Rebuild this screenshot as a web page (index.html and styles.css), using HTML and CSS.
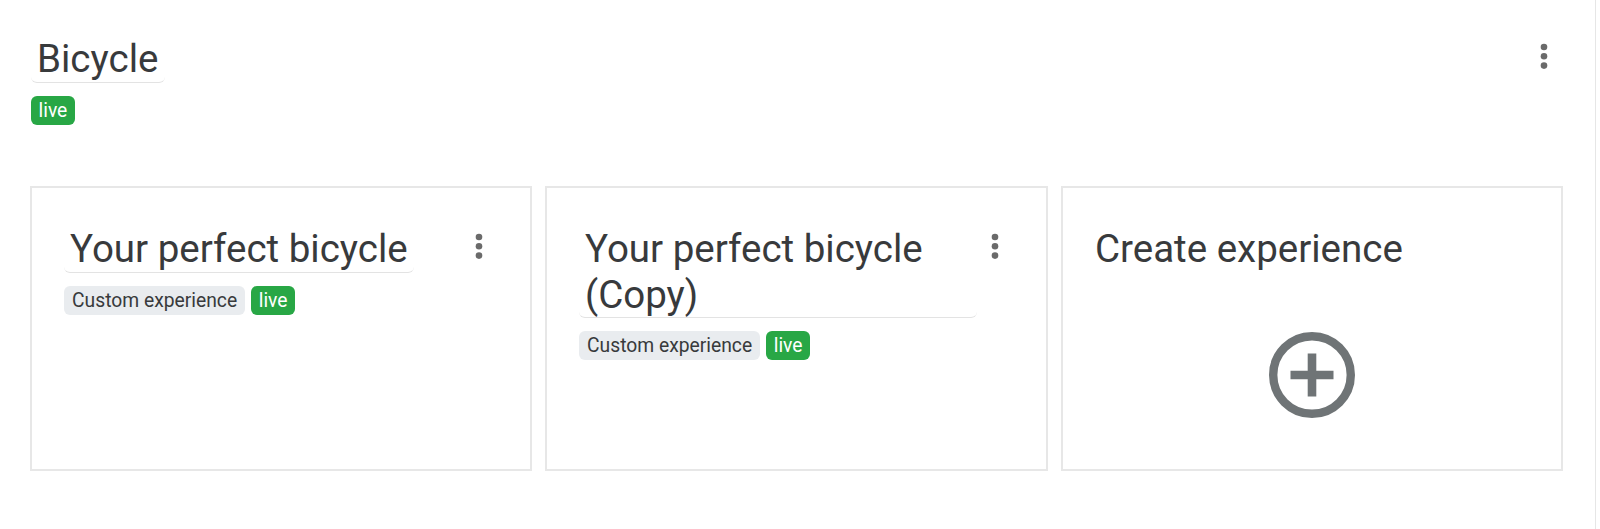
FILE: index.html
```html
<!DOCTYPE html>
<html lang="en">
<head>
<meta charset="utf-8">
<title>Bicycle</title>
<link rel="stylesheet" href="styles.css">
</head>
<body>
<main class="page">
  <header class="head">
    <div class="head-text">
      <h1 class="title title-main">Bicycle</h1>
      <div class="badges"><span class="badge badge-live">live</span></div>
    </div>
    <button class="kebab" aria-label="More"><svg width="10" height="30" viewBox="0 0 10 30"><circle cx="5" cy="5" r="3.300"/><circle cx="5" cy="14.300" r="3.300"/><circle cx="5" cy="23.600" r="3.300"/></svg></button>
  </header>
  <section class="cards">
    <article class="card">
      <div class="card-body">
        <h2 class="title title-card">Your perfect bicycle</h2>
        <div class="badges"><span class="badge badge-type">Custom experience</span><span class="badge badge-live">live</span></div>
      </div>
      <button class="kebab" aria-label="More"><svg width="10" height="30" viewBox="0 0 10 30"><circle cx="5" cy="5" r="3.300"/><circle cx="5" cy="14.300" r="3.300"/><circle cx="5" cy="23.600" r="3.300"/></svg></button>
    </article>
    <article class="card">
      <div class="card-body">
        <h2 class="title title-card">Your perfect bicycle (Copy)</h2>
        <div class="badges"><span class="badge badge-type">Custom experience</span><span class="badge badge-live">live</span></div>
      </div>
      <button class="kebab" aria-label="More"><svg width="10" height="30" viewBox="0 0 10 30"><circle cx="5" cy="5" r="3.300"/><circle cx="5" cy="14.300" r="3.300"/><circle cx="5" cy="23.600" r="3.300"/></svg></button>
    </article>
    <article class="card card-create">
      <h2 class="create-title">Create experience</h2>
      <svg class="plus" width="86" height="86" viewBox="0 0 86 86"><circle cx="43" cy="43" r="38.800" fill="none" stroke-width="8.400"/><path d="M38.700 21.500h8.600v17.200h17.200v8.600h-17.200v17.200h-8.600v-17.200h-17.200v-8.600h17.200z" stroke="none"/></svg>
    </article>
  </section>
</main>
</body>
</html>
```
FILE: styles.css
```css
* { box-sizing: border-box; }
html, body { margin: 0; height: 100%; background: #fff; }
body { font-family: Roboto, "Liberation Sans", sans-serif; color: #383a3c; overflow: hidden; }
.page { width: 1596px; height: 529px; padding: 36px 32px 0 30px; border-right: 1px solid #e6e6e6; }
.head { display: flex; justify-content: space-between; align-items: flex-start; height: 150px; padding: 0 14px 0 1px; }
.kebab { border: 0; background: none; padding: 0; margin-top: 6px; display: block; line-height: 0; flex: none; }
.kebab svg { fill: #6a6a6a; }
.title { margin: 0; width: fit-content; font-size: 38.500px; line-height: 45.500px; font-weight: 400; color: #383a3c; padding: 0 6px; border-bottom: 1px solid #e3e3e3; border-radius: 0 0 6px 6px; }
.title-main { width: 134px; }
.badges { display: flex; gap: 6.500px; margin-top: 13px; }
.badge { display: block; height: 29px; line-height: 29px; border-radius: 6px; font-size: 19.300px; }
.badge-live { background: #28a745; color: #fff; padding: 0 7.500px; }
.badge-type { background: #e9ecef; color: #383a3c; padding: 0 7.500px 0 8px; }
.cards { display: grid; grid-template-columns: 502px 503px 502px; gap: 13px; }
.card { height: 285px; border: 2px solid #e7e7e7; padding: 38px 46px 0 32px; display: flex; justify-content: space-between; align-items: flex-start; gap: 13px; }
.card-body { flex: 1; min-width: 0; }
.card-create { display: block; padding-right: 0; }
.create-title { margin: 0; font-size: 38.500px; line-height: 45.500px; font-weight: 400; color: #383a3c; }
.plus { display: block; margin: 60px auto 0; fill: #6f7476; stroke: #6f7476; transform: translateX(-16px); }
```
